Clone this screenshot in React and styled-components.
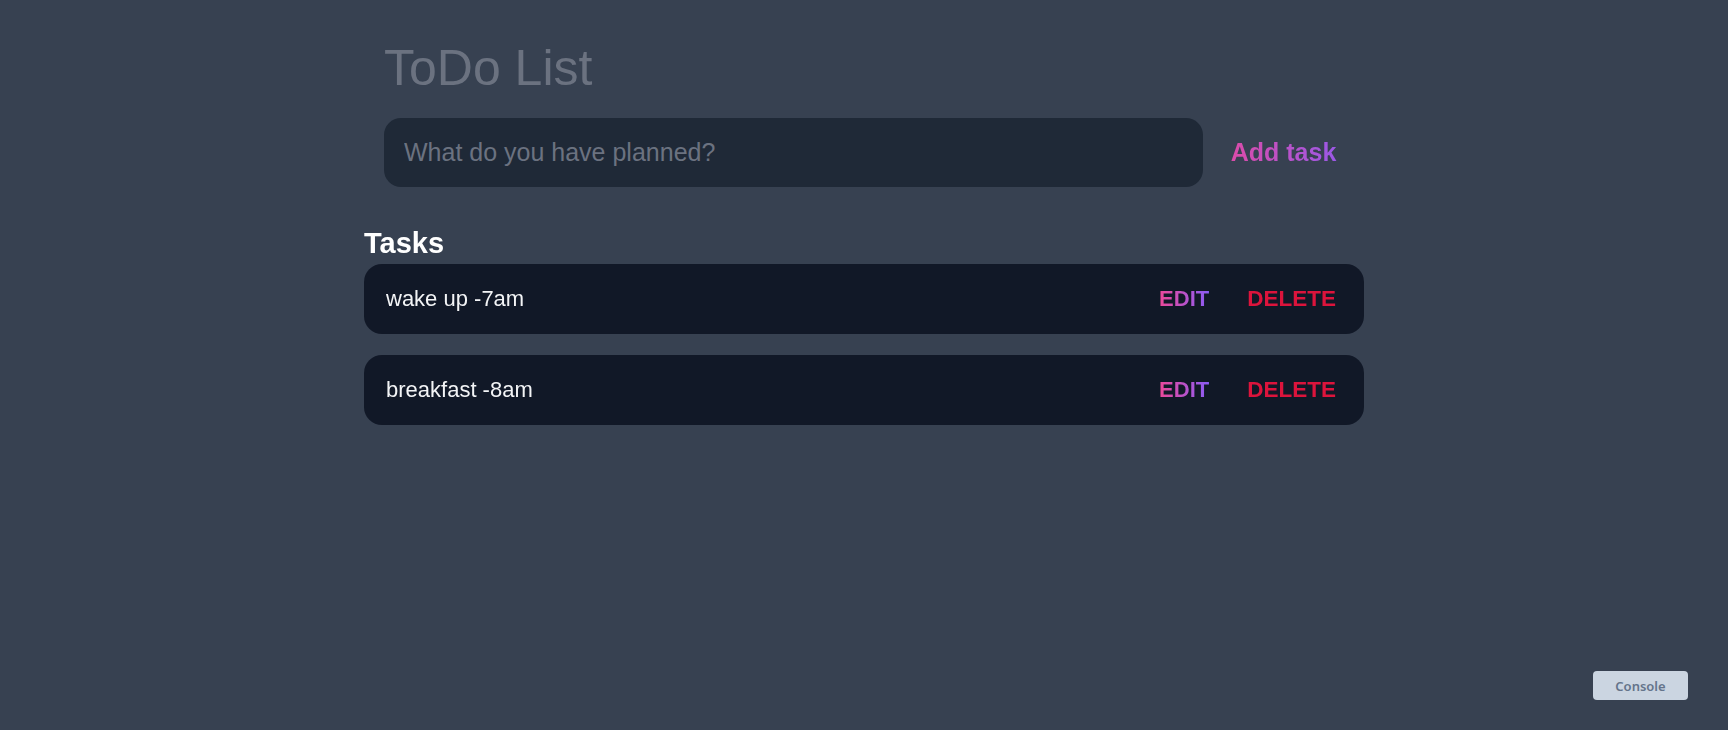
import React, { useState } from 'react'
import styled, { createGlobalStyle } from 'styled-components'

const GlobalStyle = createGlobalStyle`
    html, body {
        margin: 0;
        padding: 0;
        background-color: #374151;
        font-family: "Liberation Sans", Arial, sans-serif;
    }
    * {
        box-sizing: border-box;
    }
`

const initialTasks = [
    { id: 1, text: 'wake up -7am' },
    { id: 2, text: 'breakfast -8am' },
]

const App = () => {
    const [tasks] = useState(initialTasks)
    const [value, setValue] = useState('')

    return (
        <Page>
            <GlobalStyle />
            <Wrapper>
                <Header>
                    <Title>ToDo List</Title>
                    <Form onSubmit={(e) => e.preventDefault()}>
                        <Input
                            autoFocus
                            value={value}
                            onChange={(e) => setValue(e.target.value)}
                            placeholder='What do you have planned?'
                        />
                        <GradientButton type='submit' size='25px'>Add task</GradientButton>
                    </Form>
                </Header>
                <TaskSection>
                    <SectionTitle>Tasks</SectionTitle>
                    <TaskList>
                        {tasks.map((task) => (
                            <TaskRow key={task.id}>
                                <TaskText>{task.text}</TaskText>
                                <Actions>
                                    <GradientButton size='22px'>EDIT</GradientButton>
                                    <DeleteButton>DELETE</DeleteButton>
                                </Actions>
                            </TaskRow>
                        ))}
                    </TaskList>
                </TaskSection>
            </Wrapper>
            <ConsoleButton>Console</ConsoleButton>
        </Page>
    )
}

const Page = styled.main`
    min-height: 100vh;
    width: 100%;
    background-color: #374151;
`

const Wrapper = styled.div`
    width: 1000px;
    margin: 0 auto;
    padding-top: 44px;
`

const Header = styled.header`
    padding-left: 20px;
    display: flex;
    flex-direction: column;
    gap: 26px;
`

const Title = styled.h1`
    margin: 0;
    font-size: 50px;
    line-height: 48px;
    font-weight: 400;
    color: #6b7280;
`

const Form = styled.form`
    display: flex;
    align-items: center;
`

const Input = styled.input`
    flex: 1;
    height: 69px;
    padding: 0 20px;
    border: none;
    outline: none;
    border-radius: 17px;
    background-color: #1f2937;
    color: #e5e7eb;
    caret-color: #ffffff;
    font-family: "Liberation Sans", Arial, sans-serif;
    font-size: 25px;
    &::placeholder {
        color: #6b7280;
    }
`

const GradientButton = styled.button`
    border: none;
    background: linear-gradient(to right, #ec4899, #8b5cf6);
    -webkit-background-clip: text;
    background-clip: text;
    color: transparent;
    font-family: "Liberation Sans", Arial, sans-serif;
    font-size: ${({ size }) => size};
    font-weight: 700;
    cursor: pointer;
    padding: 0;
    ${Form} & {
        width: 161px;
        text-align: center;
    }
`

const TaskSection = styled.section`
    margin-top: 40px;
`

const SectionTitle = styled.h2`
    margin: 0 0 4px 0;
    font-size: 29px;
    font-weight: 700;
    line-height: normal;
    color: #ffffff;
`

const TaskList = styled.div`
    display: flex;
    flex-direction: column;
    gap: 21px;
`

const TaskRow = styled.div`
    height: 70px;
    display: flex;
    align-items: center;
    justify-content: space-between;
    padding: 0 28px 0 22px;
    border-radius: 18px;
    background-color: #111827;
`

const TaskText = styled.span`
    font-size: 22px;
    color: #f3f4f6;
`

const Actions = styled.div`
    display: flex;
    align-items: center;
    gap: 38px;
`

const DeleteButton = styled.button`
    border: none;
    background: none;
    padding: 0;
    color: #dc143c;
    font-family: "Liberation Sans", Arial, sans-serif;
    font-size: 22.5px;
    font-weight: 700;
    cursor: pointer;
`

const ConsoleButton = styled.button`
    position: fixed;
    right: 40px;
    bottom: 30px;
    width: 95px;
    height: 29px;
    border: none;
    border-radius: 4px;
    background-color: #cbd5e1;
    color: #64748b;
    font-family: "Noto Sans", sans-serif;
    font-size: 13px;
    font-weight: 600;
    cursor: pointer;
`

export default App
